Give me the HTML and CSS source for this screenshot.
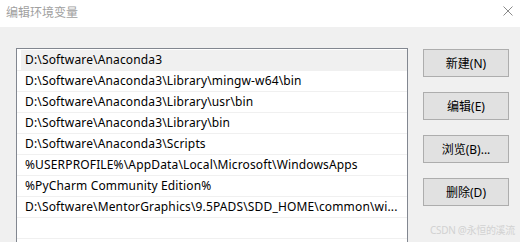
FILE: index.html
```html
<!DOCTYPE html>
<html lang="zh-CN">

<head>
    <meta charset="UTF-8">
    <title>编辑环境变量</title>
    <link rel="stylesheet" href="styles.css">
</head>

<body>
    <div class="dialog">
        <div class="title-bar">
            <span class="title">编辑环境变量</span>
            <svg class="close" viewBox="0 0 10 10">
                <path d="M0.5 0.5 L9.5 9.5 M9.5 0.5 L0.5 9.5" stroke="#8a8a8a" stroke-width="1" fill="none"/>
            </svg>
        </div>

        <div class="content">
            <div class="path-list">
                <div class="row selected"><div class="cell">D:\Software\Anaconda3</div></div>
                <div class="row"><div class="cell">D:\Software\Anaconda3\Library\mingw-w64\bin</div></div>
                <div class="row"><div class="cell">D:\Software\Anaconda3\Library\usr\bin</div></div>
                <div class="row"><div class="cell">D:\Software\Anaconda3\Library\bin</div></div>
                <div class="row"><div class="cell">D:\Software\Anaconda3\Scripts</div></div>
                <div class="row"><div class="cell">%USERPROFILE%\AppData\Local\Microsoft\WindowsApps</div></div>
                <div class="row"><div class="cell">%PyCharm Community Edition%</div></div>
                <div class="row"><div class="cell">D:\Software\MentorGraphics\9.5PADS\SDD_HOME\common\wi...</div></div>
                <div class="row"><div class="cell"></div></div>
            </div>

            <div class="buttons">
                <button>新建(N)</button>
                <button>编辑(E)</button>
                <button>浏览(B)...</button>
                <button>删除(D)</button>
                <button class="gap"></button>
            </div>
        </div>

        <div class="watermark">CSDN @永恒的溪流</div>
    </div>
</body>

</html>
```

FILE: styles.css
```css
body {
    margin: 0;
    font-family: "Noto Sans", "Noto Sans CJK SC", sans-serif;
    font-size: 12px;
    color: #000;
    background-color: #f0f0f0;
    overflow: hidden;
}

.dialog {
    position: relative;
    height: 242px;
    overflow: hidden;
}

.title-bar {
    height: 27px;
    background-color: #fff;
    display: flex;
    align-items: center;
    justify-content: space-between;
    padding: 0 7px 0 6px;
}

.title {
    color: #a0a0a0;
    font-size: 12px;
    margin-top: -3px;
}

.close {
    width: 10px;
    height: 10px;
    margin-top: -5px;
}

.content {
    display: flex;
    align-items: flex-start;
    padding: 21px 11px 0 16px;
}

.path-list {
    width: 390px;
    height: 300px;
    border: 1px solid #828790;
    background-color: #fff;
    padding-top: 1px;
}

.row {
    height: 20px;
    border-bottom: 1px solid #f0f0f0;
}

.cell {
    height: 20px;
    line-height: 20px;
    margin-left: 4px;
    padding-left: 4px;
    letter-spacing: 0.15px;
    white-space: nowrap;
    overflow: hidden;
}

.row.selected .cell {
    background-color: #f0f0f0;
}

.buttons {
    margin-left: 15px;
    display: flex;
    flex-direction: column;
    gap: 15px;
    padding-top: 1px;
}

button {
    width: 86px;
    height: 28px;
    margin: 0;
    padding: 0;
    font-family: "Noto Sans", "Noto Sans CJK SC", sans-serif;
    font-size: 12px;
    color: #000;
    background-color: #e1e1e1;
    border: 1px solid #adadad;
    border-radius: 0;
}

button.gap {
    margin-top: 21px;
}

.watermark {
    position: absolute;
    left: 430px;
    top: 223px;
    font-size: 10px;
    line-height: 14px;
    letter-spacing: -0.3px;
    color: #d2d2d2;
    white-space: nowrap;
}
```
